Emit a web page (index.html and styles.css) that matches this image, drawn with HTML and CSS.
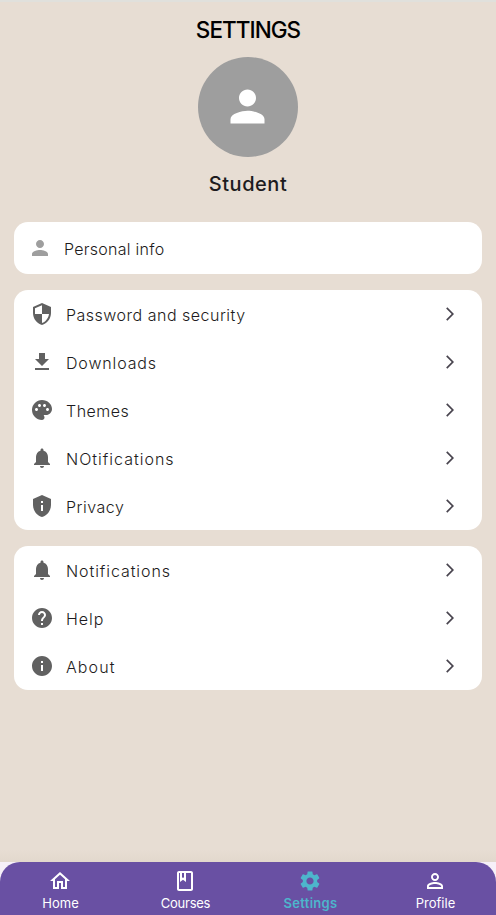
FILE: index.html
```
<!DOCTYPE html>
<html lang="en">
<head>
<meta charset="utf-8">
<title>Settings</title>
<link rel="stylesheet" href="styles.css">
</head>
<body>
<svg class="sprite" aria-hidden="true">
  <symbol id="person" viewBox="0 0 24 24"><path d="M12 12c2.21 0 4-1.79 4-4s-1.79-4-4-4-4 1.79-4 4 1.79 4 4 4zm0 2c-2.67 0-8 1.34-8 4v2h16v-2c0-2.66-5.33-4-8-4z"/></symbol>
  <symbol id="shield" viewBox="0 0 24 24"><path d="M12 1L3 5v6c0 5.55 3.84 10.74 9 12 5.16-1.26 9-6.45 9-12V5l-9-4zm0 10.99h7c-.53 4.12-3.28 7.79-7 8.94V12H5V6.3l7-3.11v8.8z"/></symbol>
  <symbol id="download" viewBox="0 0 24 24"><path d="M19 9h-4V3H9v6H5l7 7 7-7zM5 18v2h14v-2H5z"/></symbol>
  <symbol id="palette" viewBox="0 0 24 24"><path d="M12 2C6.49 2 2 6.49 2 12s4.49 10 10 10c1.38 0 2.5-1.12 2.5-2.5 0-.61-.23-1.2-.64-1.67-.08-.1-.13-.21-.13-.33 0-.28.22-.5.5-.5H16c3.31 0 6-2.69 6-6 0-4.96-4.49-9-10-9zm-5.5 11c-.83 0-1.5-.67-1.5-1.5S5.67 10 6.5 10s1.5.67 1.5 1.5S7.33 13 6.5 13zm3-4C8.67 9 8 8.33 8 7.500S8.670 6 9.500 6s1.500.670 1.500 1.500S10.330 9 9.500 9zm5 0c-.83 0-1.500-.67-1.500-1.500S13.670 6 14.500 6s1.500.670 1.500 1.500S15.330 9 14.500 9zm3 4c-.83 0-1.500-.67-1.500-1.500s.67-1.500 1.500-1.500 1.500.67 1.500 1.500-.67 1.500-1.500 1.500z"/></symbol>
  <symbol id="bell" viewBox="0 0 24 24"><path d="M12 22c1.100 0 2-.9 2-2h-4c0 1.100.89 2 2 2zm6-6v-5c0-3.070-1.640-5.640-4.500-6.320V4c0-.83-.67-1.500-1.500-1.500s-1.500.67-1.500 1.500v.68C7.630 5.360 6 7.920 6 11v5l-2 2v1h16v-1l-2-2z"/></symbol>
  <symbol id="privacy" viewBox="0 0 24 24"><path d="M12 1L3 5v6c0 5.550 3.840 10.740 9 12 5.160-1.260 9-6.450 9-12V5l-9-4zm1 16h-2v-6h2v6zm0-8h-2V7h2v2z"/></symbol>
  <symbol id="help" viewBox="0 0 24 24"><path d="M12 2C6.480 2 2 6.480 2 12s4.480 10 10 10 10-4.480 10-10S17.520 2 12 2zm1 17h-2v-2h2v2zm2.070-7.750l-.9.920C13.450 12.900 13 13.500 13 15h-2v-.5c0-1.100.45-2.100 1.170-2.830l1.240-1.260c.37-.36.59-.86.59-1.410 0-1.100-.9-2-2-2s-2 .9-2 2H8c0-2.210 1.790-4 4-4s4 1.790 4 4c0 .88-.36 1.680-.93 2.250z"/></symbol>
  <symbol id="info" viewBox="0 0 24 24"><path d="M12 2C6.480 2 2 6.480 2 12s4.480 10 10 10 10-4.480 10-10S17.520 2 12 2zm1 15h-2v-6h2v6zm0-8h-2V7h2v2z"/></symbol>
  <symbol id="chevron" viewBox="0 0 24 24"><path d="M6.230 20.230L8 22l10-10L8 2 6.230 3.770 14.460 12z"/></symbol>
  <symbol id="home" viewBox="0 0 24 24"><path d="M12 5.690l5 4.500V18h-2v-6H9v6H7v-7.810l5-4.500M12 3L2 12h3v8h6v-6h2v6h6v-8h3L12 3z"/></symbol>
  <symbol id="book" viewBox="0 0 24 24"><path d="M18 2H6c-1.100 0-2 .9-2 2v16c0 1.100.9 2 2 2h12c1.100 0 2-.9 2-2V4c0-1.100-.9-2-2-2zM9 4h2v5l-1-.75L9 9V4zm9 16H6V4h1v9l3-2.250L13 13V4h5v16z"/></symbol>
  <symbol id="gear" viewBox="0 0 24 24"><path d="M19.140 12.940c.04-.3.060-.61.060-.94 0-.32-.02-.64-.07-.94l2.030-1.580c.18-.14.23-.41.12-.61l-1.920-3.320c-.12-.22-.37-.29-.59-.22l-2.390.96c-.5-.38-1.030-.7-1.620-.94l-.36-2.540c-.04-.24-.24-.41-.48-.41h-3.840c-.24 0-.43.17-.47.41l-.36 2.540c-.59.24-1.130.57-1.620.94l-2.390-.96c-.22-.08-.47 0-.59.22L2.740 8.870c-.12.21-.08.47.12.61l2.030 1.580c-.05.3-.09.63-.09.94s.02.64.07.94l-2.030 1.580c-.18.14-.23.41-.12.61l1.920 3.320c.12.22.37.29.59.22l2.390-.96c.5.38 1.030.7 1.620.94l.36 2.540c.05.24.24.41.48.41h3.840c.24 0 .44-.17.47-.41l.36-2.540c.59-.24 1.130-.56 1.620-.94l2.390.96c.22.08.47 0 .59-.22l1.920-3.320c.12-.22.07-.47-.12-.61l-2.010-1.580zM12 15.600c-1.980 0-3.600-1.620-3.600-3.600s1.620-3.600 3.600-3.600 3.600 1.620 3.600 3.600-1.620 3.600-3.600 3.600z"/></symbol>
  <symbol id="profile" viewBox="0 0 24 24"><path d="M12 5.900c1.160 0 2.100.94 2.100 2.100s-.94 2.100-2.100 2.100S9.900 9.160 9.900 8s.94-2.100 2.100-2.100m0 9c2.970 0 6.100 1.460 6.100 2.100v1.100H5.900V17c0-.64 3.130-2.100 6.100-2.100M12 4C9.790 4 8 5.790 8 8s1.790 4 4 4 4-1.790 4-4-1.790-4-4-4zm0 9c-2.670 0-8 1.340-8 4v3h16v-3c0-2.660-5.330-4-8-4z"/></symbol>
</svg>

<div class="app">
  <main class="content">
    <h1 class="title">SETTINGS</h1>
    <div class="avatar"><svg><use href="#person"/></svg></div>
    <h2 class="name">Student</h2>

    <section class="card personal">
      <svg class="icon"><use href="#person"/></svg>
      <span class="label t-personal">Personal info</span>
    </section>

    <section class="card">
      <div class="row"><svg class="icon"><use href="#shield"/></svg><span class="label">Password and security</span><svg class="chevron"><use href="#chevron"/></svg></div>
      <div class="row"><svg class="icon"><use href="#download"/></svg><span class="label t-downloads">Downloads</span><svg class="chevron"><use href="#chevron"/></svg></div>
      <div class="row"><svg class="icon"><use href="#palette"/></svg><span class="label">Themes</span><svg class="chevron"><use href="#chevron"/></svg></div>
      <div class="row"><svg class="icon"><use href="#bell"/></svg><span class="label t-alerts">NOtifications</span><svg class="chevron"><use href="#chevron"/></svg></div>
      <div class="row"><svg class="icon"><use href="#privacy"/></svg><span class="label">Privacy</span><svg class="chevron"><use href="#chevron"/></svg></div>
    </section>

    <section class="card">
      <div class="row"><svg class="icon"><use href="#bell"/></svg><span class="label t-notifications">Notifications</span><svg class="chevron"><use href="#chevron"/></svg></div>
      <div class="row"><svg class="icon"><use href="#help"/></svg><span class="label t-help">Help</span><svg class="chevron"><use href="#chevron"/></svg></div>
      <div class="row"><svg class="icon"><use href="#info"/></svg><span class="label t-about">About</span><svg class="chevron"><use href="#chevron"/></svg></div>
    </section>
  </main>

  <div class="dock">
    <nav class="nav">
      <a class="tab"><svg><use href="#home"/></svg><span>Home</span></a>
      <a class="tab courses"><svg><use href="#book"/></svg><span>Courses</span></a>
      <a class="tab active"><svg><use href="#gear"/></svg><span>Settings</span></a>
      <a class="tab"><svg><use href="#profile"/></svg><span>Profile</span></a>
    </nav>
  </div>
</div>
</body>
</html>
```
FILE: styles.css
```
* { box-sizing: border-box; }
body {
  margin: 0;
  font-family: Inter, "Liberation Sans", sans-serif;
  color: #1d1b20;
}
svg { display: block; fill: currentColor; flex: none; }
.sprite { display: none; }
.app {
  height: 915px;
  display: flex;
  flex-direction: column;
  background: #e7ddd3;
  border-top: 2px solid #e0e0dc;
  overflow: hidden;
}
.content {
  flex: 1;
  padding: 13px 14px 0;
  background: linear-gradient(to top, #e2d8cd, rgba(231, 221, 211, 0) 12px);
}
.title {
  margin: 0;
  font-size: 22.5px;
  line-height: 30px;
  font-weight: 500;
  letter-spacing: -0.95px;
  text-align: center;
  color: #000;
}
.avatar {
  width: 100px;
  height: 100px;
  margin: 12px auto 0;
  border-radius: 50%;
  background: #9e9e9e;
  color: #fff;
  display: grid;
  place-items: center;
}
.avatar svg { width: 51px; height: 51px; margin: 0 1px 1px 0; }
.name {
  margin: 12px 0 0;
  font-size: 20px;
  line-height: 30px;
  font-weight: 500;
  letter-spacing: 0.55px;
  text-align: center;
}
.card {
  margin-top: 16px;
  border-radius: 14px;
  background: #fff;
  overflow: hidden;
}
.personal {
  height: 52px;
  margin-top: 23px;
  padding-left: 14px;
  display: flex;
  align-items: center;
}
.personal .icon { color: #9e9e9e; }
.row {
  height: 48px;
  padding: 0 24px 0 16px;
  display: flex;
  align-items: center;
}
.icon { width: 24px; height: 24px; color: #616161; }
.label {
  flex: 1;
  margin-left: 12px;
  padding-top: 2px;
  font-size: 16px;
  line-height: 24px;
  font-weight: 300;
  letter-spacing: 0.5px;
  white-space: nowrap;
}
.t-personal { letter-spacing: 0.27px; }
.t-downloads { letter-spacing: 0.85px; }
.t-alerts { letter-spacing: 1px; }
.t-notifications { letter-spacing: 0.92px; }
.t-help { letter-spacing: 0.95px; }
.t-about { letter-spacing: 1.1px; }
.chevron { width: 16px; height: 16px; color: #49454f; }
.dock { background: #f6f0f8; }
.nav {
  height: 53px;
  padding-top: 7px;
  border-radius: 20px 20px 0 0;
  background: #6950a3;
  display: grid;
  grid-template-columns: repeat(4, 125px);
  justify-content: center;
}
.tab {
  display: flex;
  flex-direction: column;
  align-items: center;
  color: #fff;
  font-size: 13px;
  line-height: 18px;
}
.tab svg { width: 24px; height: 24px; margin-right: 1px; }
.tab span { margin-top: 1px; }
.courses { letter-spacing: -0.25px; }
.active { color: #4db6cc; font-weight: 600; letter-spacing: 0.3px; }
```
